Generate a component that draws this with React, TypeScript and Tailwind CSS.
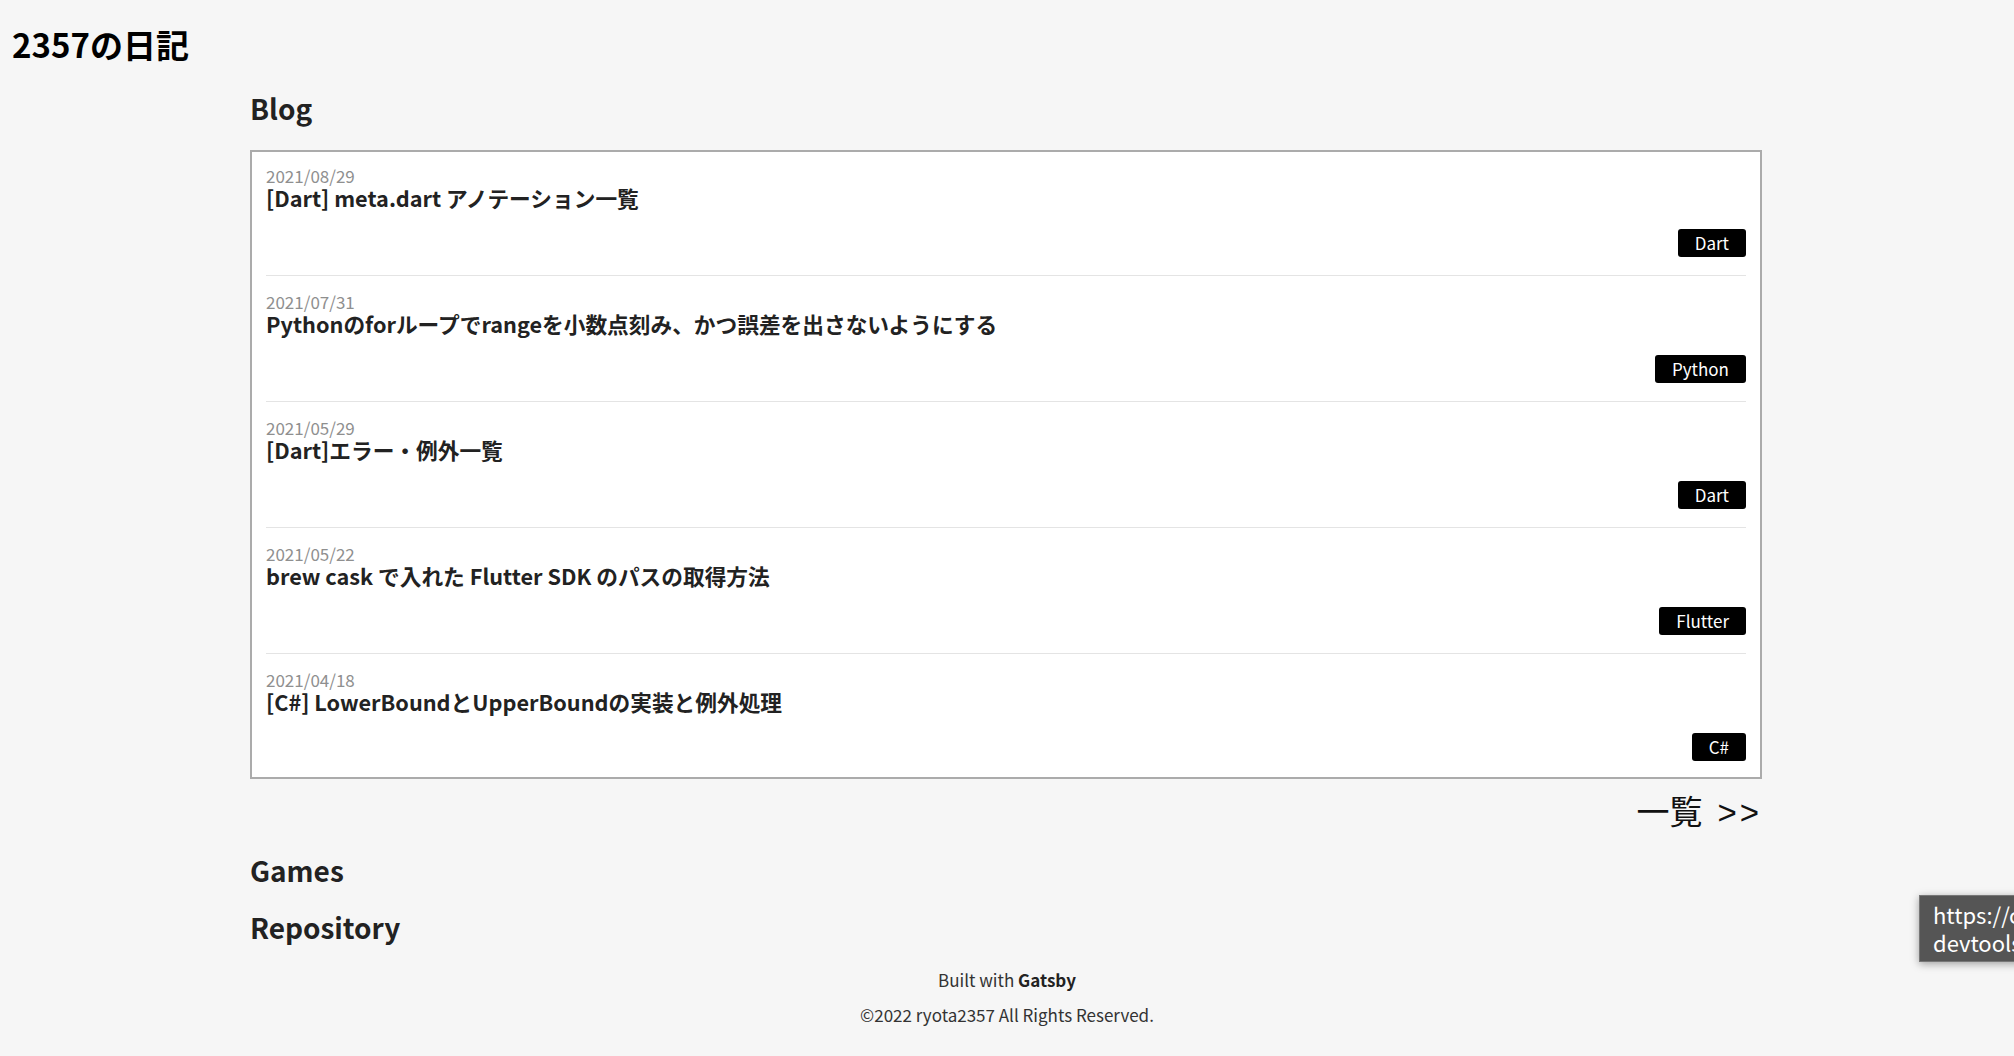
const posts = [
  { date: '2021/08/29', title: '[Dart] meta.dart アノテーション一覧', tag: 'Dart' },
  { date: '2021/07/31', title: 'Pythonのforループでrangeを小数点刻み、かつ誤差を出さないようにする', tag: 'Python' },
  { date: '2021/05/29', title: '[Dart]エラー・例外一覧', tag: 'Dart' },
  { date: '2021/05/22', title: 'brew cask で入れた Flutter SDK のパスの取得方法', tag: 'Flutter' },
  { date: '2021/04/18', title: '[C#] LowerBoundとUpperBoundの実装と例外処理', tag: 'C#' },
];

const font = { fontFamily: '"Noto Sans CJK JP", "Noto Sans", sans-serif' };

function PostRow({ post, first, last }: { post: (typeof posts)[number]; first: boolean; last: boolean }) {
  return (
    <li className={`${first ? 'pt-[14px]' : 'pt-[16px]'} ${last ? '' : 'pb-[18px] border-b border-[#e4e4e4]'}`}>
      <div className="text-[17px] leading-[20px] text-[#8f8f8f]">{post.date}</div>
      <div className="text-[21.7px] leading-[24px] font-bold text-[#222]">{post.title}</div>
      <div className="flex justify-end mt-[19px]">
        <span className="h-[28px] px-[17px] flex items-center bg-black text-white text-[17px] font-normal rounded-[3px]">
          {post.tag}
        </span>
      </div>
    </li>
  );
}

export default function App() {
  return (
    <div className="relative min-h-screen overflow-hidden bg-[#f6f6f6] text-[#222]" style={font}>
      {/* ヘッダー */}
      <header className="pt-[22px] px-[12px]">
        <h1 className="text-[33px] leading-[44px] font-bold text-black">2357の日記</h1>
      </header>

      <main className="ml-[250px] w-[1512px]">
        {/* Blog */}
        <h2 className="mt-[24px] text-[28px] leading-[36px] font-bold">Blog</h2>
        <ul className="mt-[24px] bg-white border-2 border-[#ababab] px-[14px] pb-[16px]">
          {posts.map((p, i) => (
            <PostRow key={p.date} post={p} first={i === 0} last={i === posts.length - 1} />
          ))}
        </ul>
        <div className="flex justify-end mt-[11px]">
          <a className="flex items-baseline text-[33px] leading-[40px] text-[#111]">
            <span>一覧</span>
            <span className="ml-[15px] tracking-[3px]" style={{ fontFamily: '"Liberation Sans", sans-serif' }}>
              &gt;&gt;
            </span>
          </a>
        </div>

        <h2 className="mt-[19px] text-[28px] leading-[36px] font-bold">Games</h2>
        <h2 className="mt-[21px] text-[28px] leading-[36px] font-bold">Repository</h2>
      </main>

      {/* フッター */}
      <footer className="mt-[23px] pb-[30px] text-center text-[17px] leading-[24px] text-[#333]">
        <div>
          Built with <span className="font-bold text-[#222]">Gatsby</span>
        </div>
        <div className="mt-[11px]">©2022 ryota2357 All Rights Reserved.</div>
      </footer>

      {/* ツールチップ */}
      <div className="absolute left-[1919px] top-[895px] w-[400px] h-[67px] bg-[#555] border border-[#777] shadow-[0_2px_8px_rgba(0,0,0,0.35)] px-[13px] pt-[4px] text-[22px] leading-[28px] text-white whitespace-nowrap">
        <div>https://chrome.google.com/webstore</div>
        <div>devtools://devtools/bundled</div>
      </div>
    </div>
  );
}
